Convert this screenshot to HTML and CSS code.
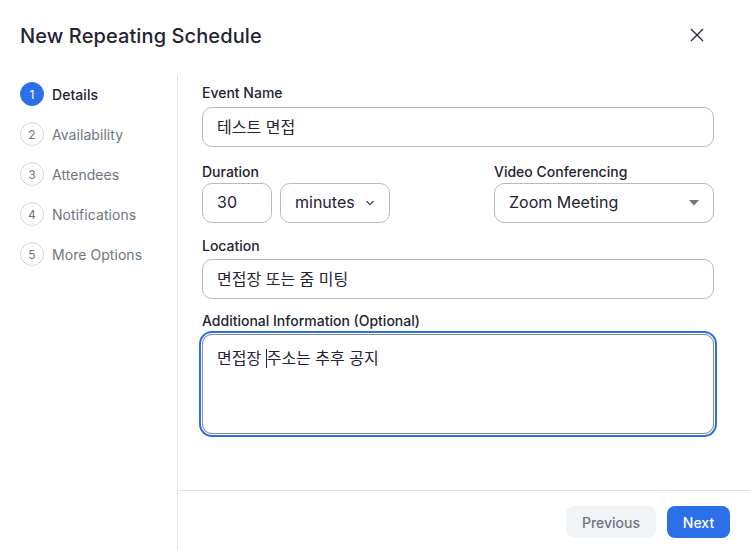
FILE: index.html
```html
<!DOCTYPE html>
<html lang="ko">
<head>
<meta charset="utf-8">
<title>New Repeating Schedule</title>
<link rel="stylesheet" href="styles.css">
</head>
<body>
<div class="dialog">
  <header class="header">
    <h1 class="title">New Repeating Schedule</h1>
    <button class="close" aria-label="Close">
      <svg width="14" height="14" viewBox="0 0 14 14"><path d="M1 1L13 13M13 1L1 13" stroke="#232333" stroke-width="1.3" fill="none"/></svg>
    </button>
  </header>
  <div class="body">
    <nav class="steps">
      <div class="step active"><span class="num">1</span><span class="label">Details</span></div>
      <div class="step"><span class="num">2</span><span class="label">Availability</span></div>
      <div class="step"><span class="num">3</span><span class="label">Attendees</span></div>
      <div class="step"><span class="num">4</span><span class="label">Notifications</span></div>
      <div class="step"><span class="num">5</span><span class="label">More Options</span></div>
    </nav>
    <main class="main">
      <div class="form">
        <div class="field f-name">
          <label class="lbl">Event Name</label>
          <div class="input ko">테스트 면접</div>
        </div>
        <div class="row f-duration">
          <div class="field">
            <label class="lbl">Duration</label>
            <div class="dur">
              <div class="input num-input">30</div>
              <div class="input select-min">minutes
                <svg class="chev" width="10" height="6" viewBox="0 0 10 6"><path d="M1.5 1.2L5 4.6L8.5 1.2" stroke="#232333" stroke-width="1.1" fill="none"/></svg>
              </div>
            </div>
          </div>
          <div class="field video">
            <label class="lbl">Video Conferencing</label>
            <div class="input select-video">Zoom Meeting
              <svg class="caret" width="10" height="6" viewBox="0 0 10 6"><path d="M0 0H10L5 5.5Z" fill="#6e7680"/></svg>
            </div>
          </div>
        </div>
        <div class="field f-loc">
          <label class="lbl">Location</label>
          <div class="input ko">면접장 또는 줌 미팅</div>
        </div>
        <div class="field f-info">
          <label class="lbl">Additional Information (Optional)</label>
          <div class="textarea">면접장 <span class="cursor"></span>주소는 추후 공지</div>
        </div>
      </div>
      <footer class="footer">
        <button class="btn prev">Previous</button>
        <button class="btn next">Next</button>
      </footer>
    </main>
  </div>
</div>
</body>
</html>
```

FILE: styles.css
```css
* { box-sizing: border-box; }
html, body { margin: 0; padding: 0; background: #fff; }
body {
  font-family: Inter, "Noto Sans CJK KR", sans-serif;
  color: #232333;
}
.dialog {
  width: 750px;
  height: 550px;
  display: flex;
  flex-direction: column;
  background: #fff;
}
.header {
  height: 75px;
  display: flex;
  align-items: center;
  justify-content: space-between;
  padding: 0 46px 0 20px;
  flex: none;
}
.title {
  margin: 0;
  font-size: 20px;
  font-weight: 500;
  letter-spacing: 0.1px;
  line-height: 24px;
  margin-top: -4px;
  color: #232333;
}
.close {
  border: 0;
  background: none;
  padding: 0;
  width: 14px;
  height: 14px;
  display: flex;
  margin-top: -5px;
}
.body {
  flex: 1;
  display: flex;
  min-height: 0;
}
.steps {
  width: 178px;
  border-right: 1px solid #e4e4e6;
  padding: 7px 0 0 20px;
  display: flex;
  flex-direction: column;
  gap: 16px;
  flex: none;
}
.step {
  display: flex;
  align-items: center;
  gap: 8px;
  height: 24px;
}
.num {
  width: 24px;
  height: 24px;
  border-radius: 50%;
  border: 1px solid #d3d3d8;
  display: flex;
  align-items: center;
  justify-content: center;
  font-size: 12px;
  color: #6e7680;
}
.label {
  font-size: 14px;
  color: #6e7680;
  letter-spacing: 0.05px;
}
.step.active .num {
  background: #2d6fe6;
  border-color: #2d6fe6;
  color: #fff;
}
.step.active .label {
  color: #232333;
  font-weight: 500;
}
.main {
  flex: 1;
  display: flex;
  flex-direction: column;
  min-width: 0;
}
.form {
  flex: 1;
  padding: 8px 36px 0 24px;
}
.field { display: flex; flex-direction: column; }
.lbl {
  font-size: 14px;
  font-weight: 500;
  line-height: 20px;
  margin-bottom: 4px;
  color: #232333;
}
.input {
  height: 40px;
  border: 1px solid #b9b9c3;
  border-radius: 10px;
  padding: 0 14px 2px;
  display: flex;
  align-items: center;
  font-size: 16px;
  color: #232333;
}
.input.ko { padding-bottom: 3px; }
.row {
  display: flex;
  justify-content: space-between;
  margin-top: 15px;
}
.row .lbl { margin-bottom: 1px; }
.dur { display: flex; gap: 8px; }
.num-input { width: 70px; }
.select-min { width: 110px; justify-content: space-between; padding-right: 14px; }
.video { width: 220px; }
.select-video { justify-content: space-between; padding-right: 14px; }
.chev { margin-top: 1px; }
.caret { margin-top: 1px; }
.f-loc { margin-top: 13px; }
.f-loc .lbl { margin-bottom: 3px; }
.f-info { margin-top: 12px; }
.f-info .lbl { margin-bottom: 3px; }
.textarea {
  height: 100px;
  border: 1px solid #8a8a94;
  border-radius: 10px;
  padding: 12px 14px;
  font-size: 16px;
  line-height: 22px;
  color: #232333;
  box-shadow: 0 0 0 1px #fff, 0 0 0 3px #2d6fe6;
}
.cursor {
  display: inline-block;
  width: 1px;
  height: 19px;
  background: #232333;
  vertical-align: -4px;
  margin-left: 0;
}
.footer {
  height: 60px;
  border-top: 1px solid #e4e4e6;
  display: flex;
  justify-content: flex-end;
  align-items: center;
  gap: 11px;
  padding: 3px 20px 0 0;
}
.btn {
  font-family: Inter, sans-serif;
  height: 32px;
  border: 0;
  border-radius: 8px;
  font-size: 14px;
  font-weight: 500;
  padding: 0;
}
.prev {
  width: 90px;
  background: #f1f4f6;
  color: #6e7680;
}
.next {
  width: 63px;
  background: #2d6fe6;
  color: #fff;
}
```
